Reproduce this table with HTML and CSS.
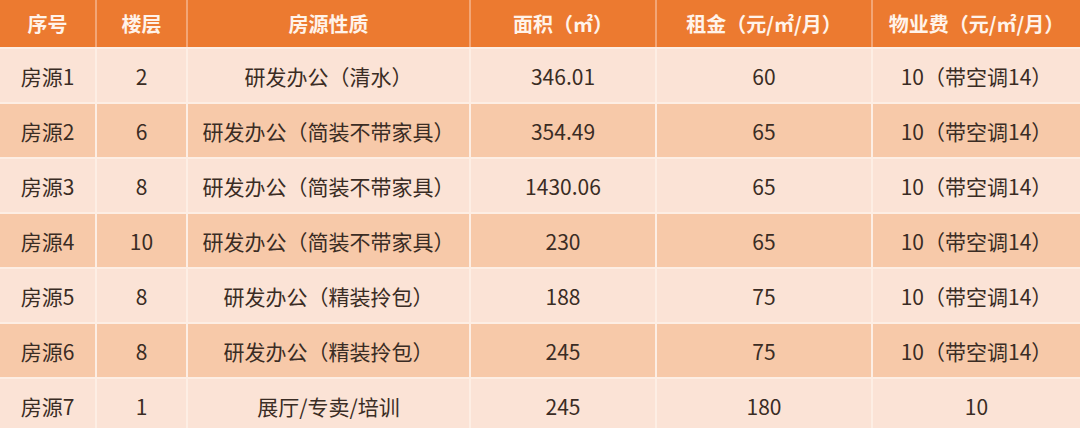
FILE: index.html
```html
<!DOCTYPE html>
<html lang="zh-CN">
<head>
<meta charset="utf-8">
<title>房源</title>
<link rel="stylesheet" href="styles.css">
</head>
<body>
<table class="rent">
  <colgroup>
    <col class="c1"><col class="c2"><col class="c3"><col class="c4"><col class="c5"><col class="c6">
  </colgroup>
  <thead>
    <tr><th>序号</th><th>楼层</th><th>房源性质</th><th>面积（㎡）</th><th>租金（元/㎡/月）</th><th>物业费（元/㎡/月）</th></tr>
  </thead>
  <tbody>
    <tr class="light"><td>房源1</td><td>2</td><td>研发办公（清水）</td><td>346.01</td><td>60</td><td>10（带空调14）</td></tr>
    <tr class="dark"><td>房源2</td><td>6</td><td>研发办公（简装不带家具）</td><td>354.49</td><td>65</td><td>10（带空调14）</td></tr>
    <tr class="light"><td>房源3</td><td>8</td><td>研发办公（简装不带家具）</td><td>1430.06</td><td>65</td><td>10（带空调14）</td></tr>
    <tr class="dark"><td>房源4</td><td>10</td><td>研发办公（简装不带家具）</td><td>230</td><td>65</td><td>10（带空调14）</td></tr>
    <tr class="light"><td>房源5</td><td>8</td><td>研发办公（精装拎包）</td><td>188</td><td>75</td><td>10（带空调14）</td></tr>
    <tr class="dark"><td>房源6</td><td>8</td><td>研发办公（精装拎包）</td><td>245</td><td>75</td><td>10（带空调14）</td></tr>
    <tr class="light"><td>房源7</td><td>1</td><td>展厅/专卖/培训</td><td>245</td><td>180</td><td>10</td></tr>
  </tbody>
</table>
</body>
</html>
```
FILE: styles.css
```css
html, body {
  margin: 0;
  padding: 0;
  background: #fbe3d6;
  overflow: hidden;
}
.rent {
  width: 1080px;
  border-collapse: collapse;
  table-layout: fixed;
  font-family: "Noto Sans CJK SC", "Noto Sans", sans-serif;
  font-size: 21px;
  color: #3a2c24;
}
.c1 { width: 96px; }
.c2 { width: 91px; }
.c3 { width: 283px; }
.c4 { width: 186px; }
.c5 { width: 216px; }
.c6 { width: 208px; }
.rent th, .rent td {
  text-align: center;
  padding: 0;
  border: 2px solid #fdeee4;
  border-top: 0;
  white-space: nowrap;
}
.rent th:first-child, .rent td:first-child { border-left: 0; }
.rent th:last-child, .rent td:last-child { border-right: 0; }
.rent thead tr { height: 48px; background: #ec7a30; }
.rent th {
  color: #fff3ea;
  font-weight: 700;
  font-size: 20px;
  border-color: #f3a676;
  border-bottom-color: #fdeee4;
}
.rent tbody tr { height: 55px; }
.rent tr.light { background: #fbe3d6; }
.rent tr.dark { background: #f7c9a9; }
.rent td { font-weight: 400; }
```
